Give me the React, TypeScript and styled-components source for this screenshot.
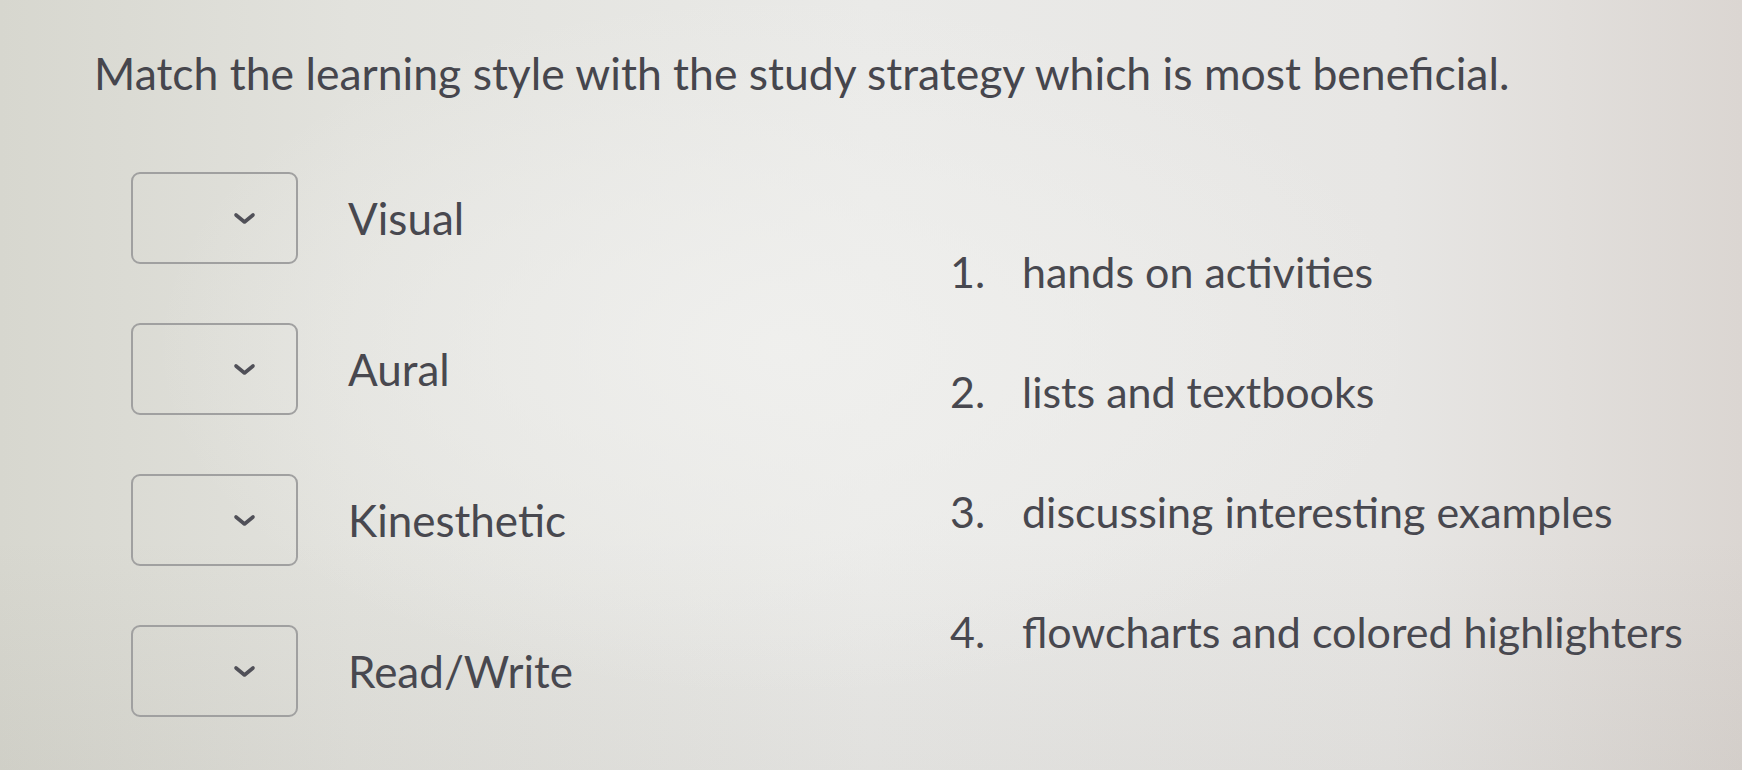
import React from "react";
import styled, { createGlobalStyle } from "styled-components";

const Global = createGlobalStyle`
  html, body { margin: 0; padding: 0; }
  body {
    width: 1742px;
    height: 770px;
    overflow: hidden;
    font-family: Lato, "Open Sans", sans-serif;
    color: #48484f;
    background:
      radial-gradient(ellipse 900px 500px at 45% 45%, rgba(240,240,238,0.9), rgba(240,240,238,0) 70%),
      linear-gradient(180deg, rgba(0,0,0,0) 70%, rgba(120,115,105,0.08) 100%),
      linear-gradient(90deg, #d7d7cf 0%, #e2e2dd 20%, #eaeae8 50%, #e7e6e4 80%, #dbd6d2 100%);
  }
`;

const Page = styled.div`
  padding: 50px 0 0 94px;
  box-sizing: border-box;
  height: 770px;
`;

const Heading = styled.h1`
  margin: 0;
  font-size: 44.5px;
  font-weight: 400;
  line-height: 46px;
  color: #46464d;
`;

const Body = styled.div`
  display: flex;
  margin-top: 76px;
  padding-left: 37px;
`;

const LeftCol = styled.div`
  display: flex;
  flex-direction: column;
  gap: 59px;
  width: 819px;
`;

const Row = styled.div`
  display: flex;
  align-items: center;
  gap: 50px;
`;

const Select = styled.div`
  width: 167px;
  height: 92px;
  box-sizing: border-box;
  border: 2px solid #a0a0a0;
  border-radius: 9px;
  display: flex;
  align-items: center;
  justify-content: flex-end;
  padding-right: 40px;
`;

const Label = styled.span`
  font-size: 44px;
  line-height: 46px;
`;

const RightCol = styled.ol`
  list-style: none;
  margin: 0;
  padding: 77px 0 0 0;
  display: flex;
  flex-direction: column;
  gap: 74px;
`;

const Item = styled.li`
  display: flex;
  font-size: 43px;
  line-height: 46px;
  white-space: nowrap;
`;

const Num = styled.span`
  width: 72px;
`;

const Chevron = () => (
  <svg width="23" height="13" viewBox="0 0 23 13" fill="none">
    <path d="M3 3 L11.5 10 L20 3" stroke="#505058" strokeWidth="3.6" strokeLinecap="round" strokeLinejoin="round" />
  </svg>
);

const styles = ["Visual", "Aural", "Kinesthetic", "Read/Write"];
const strategies = [
  "hands on activities",
  "lists and textbooks",
  "discussing interesting examples",
  "flowcharts and colored highlighters",
];

export default function App() {
  return (
    <>
      <Global />
      <Page>
        <Heading>Match the learning style with the study strategy which is most beneficial.</Heading>
        <Body>
          <LeftCol>
            {styles.map((s) => (
              <Row key={s}>
                <Select>
                  <Chevron />
                </Select>
                <Label>{s}</Label>
              </Row>
            ))}
          </LeftCol>
          <RightCol>
            {strategies.map((t, i) => (
              <Item key={t}>
                <Num>{i + 1}.</Num>
                <span>{t}</span>
              </Item>
            ))}
          </RightCol>
        </Body>
      </Page>
    </>
  );
}
